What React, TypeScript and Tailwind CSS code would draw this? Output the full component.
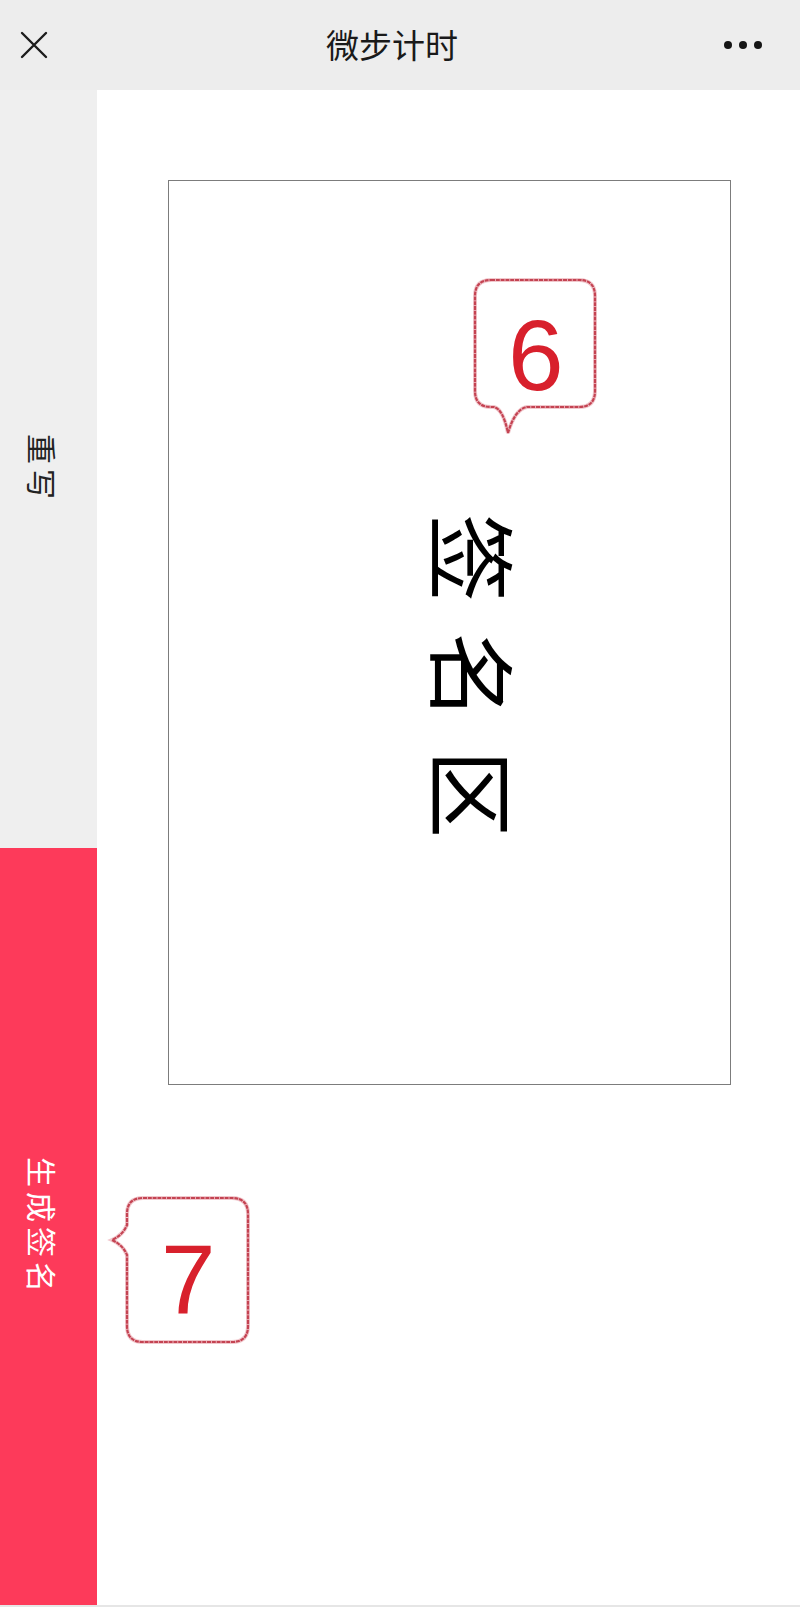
import React from 'react';

const cjk = '"Noto Sans CJK SC", "Noto Sans", sans-serif';

// speech-bubble outline drawn around the numbered hints
function Bubble({ tail }: { tail: 'bottom' | 'left' }) {
  const d =
    tail === 'bottom'
      ? 'M21 5 H109 Q125 5 125 21 V116 Q125 132 109 132 H57 Q45 134 38 158 Q33 134 24 132 H21 Q5 132 5 116 V21 Q5 5 21 5 Z'
      : 'M36 5 H125 Q141 5 141 21 V133 Q141 149 125 149 H36 Q20 149 20 133 V62 Q16 52 5 47 Q16 42 20 32 V21 Q20 5 36 5 Z';
  return (
    <svg className="absolute inset-0 h-full w-full overflow-visible" fill="none">
      <path d={d} stroke="#d0485a" strokeWidth={4} strokeOpacity={0.3} />
      <path d={d} stroke="#bf3445" strokeWidth={2.2} strokeDasharray="4 0.8" strokeOpacity={0.9} />
    </svg>
  );
}

function Hint({ n, tail, className, digitClass }: { n: string; tail: 'bottom' | 'left'; className: string; digitClass: string }) {
  return (
    <div className={`absolute ${className}`}>
      <Bubble tail={tail} />
      <span
        className={`absolute leading-none text-[#d8202c] ${digitClass}`}
        style={{ fontFamily: '"Liberation Sans", Arial, sans-serif' }}
      >
        {n}
      </span>
    </div>
  );
}

export default function App() {
  return (
    <div className="relative flex h-[1607px] w-[800px] flex-col bg-white" style={{ fontFamily: cjk }}>
      {/* title bar */}
      <div className="flex h-[90px] shrink-0 items-center bg-[#ededed]">
        <div className="flex w-[140px] items-center pl-[20px]">
          <svg width="28" height="28" viewBox="0 0 28 28" stroke="#1c1c1c" strokeWidth={2.4} strokeLinecap="round">
            <path d="M2 2 L26 26 M26 2 L2 26" />
          </svg>
        </div>
        <div className="flex-1 pr-[16px] pb-[2px] text-center text-[33px] leading-none text-[#1a1a1a]">微步计时</div>
        <div className="flex w-[140px] items-center justify-end gap-[7px] pr-[38px]">
          <span className="h-[8px] w-[8px] rounded-full bg-[#151515]" />
          <span className="h-[8px] w-[8px] rounded-full bg-[#151515]" />
          <span className="h-[8px] w-[8px] rounded-full bg-[#151515]" />
        </div>
      </div>

      <div className="flex flex-1">
        {/* side actions */}
        <div className="flex w-[97px] shrink-0 flex-col">
          <button className="flex h-[758px] items-center justify-center bg-[#efefef] pr-[11px]">
            <span className="text-[30px] leading-none tracking-[5px] text-[#222] [writing-mode:vertical-rl] [text-orientation:sideways]">
              重写
            </span>
          </button>
          <button className="flex flex-1 items-center justify-center bg-[#fd3a5a] pr-[11px]">
            <span className="text-[30px] leading-none tracking-[5px] text-white [writing-mode:vertical-rl] [text-orientation:sideways]">
              生成签名
            </span>
          </button>
        </div>

        {/* signature pad */}
        <div className="flex-1 pl-[71px] pt-[90px]">
          <div className="h-[905px] w-[563px] border-[1.5px] border-[#7c7c7c] pl-[263px] pt-[333px]">
            <span className="text-[88px] leading-none tracking-[30px] text-black [writing-mode:vertical-rl] [text-orientation:sideways]">
              签名区
            </span>
          </div>
        </div>
      </div>

      <div className="h-[2px] shrink-0 bg-[#e6e6e6]" />

      <Hint n="6" tail="bottom" className="left-[470px] top-[275px] h-[160px] w-[130px]" digitClass="left-[38px] top-[30px] text-[100px]" />
      <Hint n="7" tail="left" className="left-[107px] top-[1193px] h-[155px] w-[146px]" digitClass="left-[54px] top-[37px] text-[98px]" />
    </div>
  );
}
